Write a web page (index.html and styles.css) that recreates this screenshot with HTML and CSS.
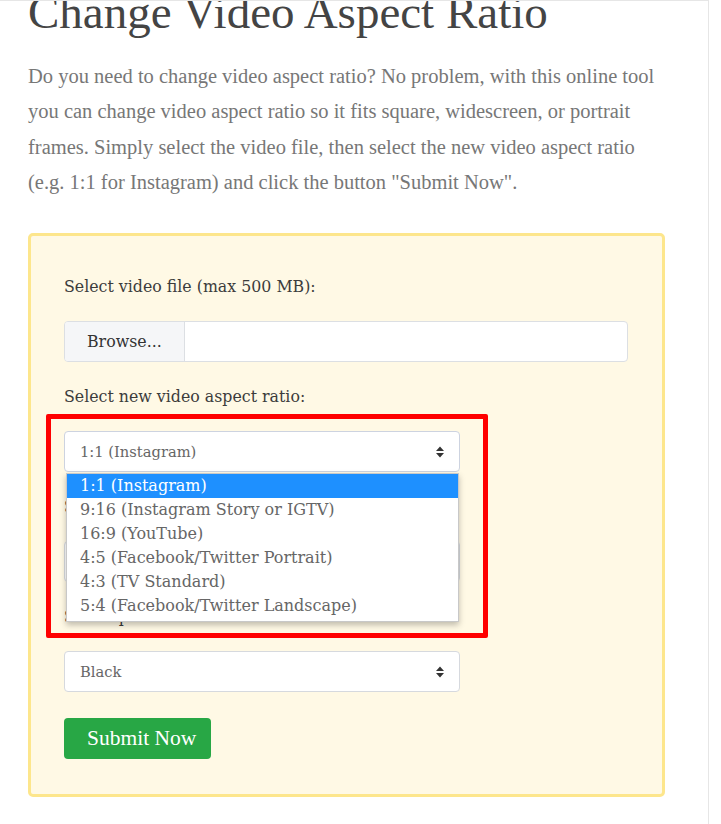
FILE: index.html
```html
<!DOCTYPE html>
<html lang="en">
	<head>
		<meta charset="UTF-8" />
		<meta name="viewport" content="width=device-width, initial-scale=1.0" />
		<title>Change Video Aspect Ratio</title>
		<link rel="stylesheet" href="styles.css">
	</head>
	<body>
		<div class="page">
			<h1 class="title">Change Video Aspect Ratio</h1>
			<p class="intro">
				Do you need to change video aspect ratio? No problem, with this online tool
				you can change video aspect ratio so it fits square, widescreen, or portrait
				frames. Simply select the video file, then select the new video aspect ratio
				(e.g. 1:1 for Instagram) and click the button "Submit Now".
			</p>

			<form class="tool-box">
				<div class="field">
					<label>Select video file (max 500 MB):</label>
					<div class="file-input">
						<span class="browse">Browse...</span>
						<span class="file-name"></span>
					</div>
				</div>

				<div class="field">
					<label>Select new video aspect ratio:</label>
					<div class="select-wrap">
						<div class="select">
							<span>1:1 (Instagram)</span>
							<svg class="arrows" width="8" height="12" viewBox="0 0 8 12">
								<path d="M0 5 L4 0.5 L8 5 Z M0 7 L8 7 L4 11.5 Z" fill="#333" />
							</svg>
						</div>
						<ul class="dropdown">
							<li class="active">1:1 (Instagram)</li>
							<li>9:16 (Instagram Story or IGTV)</li>
							<li>16:9 (YouTube)</li>
							<li>4:5 (Facebook/Twitter Portrait)</li>
							<li>4:3 (TV Standard)</li>
							<li>5:4 (Facebook/Twitter Landscape)</li>
						</ul>
						<div class="highlight"></div>
					</div>
				</div>

				<div class="field">
					<label>Select how to fit the video:</label>
					<div class="select">
						<span>Add padding</span>
						<svg class="arrows" width="8" height="12" viewBox="0 0 8 12">
							<path d="M0 5 L4 0.5 L8 5 Z M0 7 L8 7 L4 11.5 Z" fill="#333" />
						</svg>
					</div>
				</div>

				<div class="field">
					<label>Select pad color:</label>
					<div class="select">
						<span>Black</span>
						<svg class="arrows" width="8" height="12" viewBox="0 0 8 12">
							<path d="M0 5 L4 0.5 L8 5 Z M0 7 L8 7 L4 11.5 Z" fill="#333" />
						</svg>
					</div>
				</div>

				<button type="button" class="submit">Submit Now</button>
			</form>
		</div>
	</body>
</html>
```

FILE: styles.css
```css
body {
	margin: 0;
	background-color: #fff;
	font-family: "Liberation Serif", serif;
}

.page {
	width: 709px;
	min-height: 824px;
	box-sizing: border-box;
	border-top: 1px solid #e6e6e6;
	border-right: 1px solid #e6e6e6;
	padding-left: 28px;
	overflow: hidden;
}

.title {
	margin: -15px 0 0 0;
	font-size: 47px;
	line-height: 52px;
	font-weight: normal;
	color: #444;
}

.intro {
	margin: 21px 0 0 0;
	width: 637px;
	font-size: 20.5px;
	line-height: 35.3px;
	color: #777;
}

.tool-box {
	margin-top: 33px;
	width: 637px;
	box-sizing: border-box;
	padding: 39px 34px 35px 33px;
	background-color: #fff9e5;
	border: 3px solid #fde68c;
	border-radius: 5px;
}

.field {
	margin-bottom: 23px;
}

.field label {
	display: block;
	margin-bottom: 22px;
	font-family: "DejaVu Serif", serif;
	font-size: 15.8px;
	line-height: 24px;
	color: #3c3c3c;
}

.file-input {
	display: flex;
	height: 41px;
	box-sizing: border-box;
	border: 1px solid #dcdfe3;
	border-radius: 4px;
	background-color: #fff;
	overflow: hidden;
}

.file-input .browse {
	display: flex;
	align-items: center;
	width: 120px;
	box-sizing: border-box;
	padding-left: 22px;
	background-color: #f5f6f8;
	border-right: 1px solid #dcdfe3;
	font-family: "DejaVu Serif", serif;
	font-size: 15.8px;
	color: #333;
}

.select-wrap {
	position: relative;
	width: 396px;
}

.select {
	display: flex;
	align-items: center;
	justify-content: space-between;
	width: 396px;
	height: 41px;
	box-sizing: border-box;
	padding: 0 15px 0 15px;
	background-color: #fff;
	border: 1px solid #d6d9de;
	border-radius: 4px;
	font-family: "DejaVu Serif", serif;
	font-size: 14.7px;
	color: #666;
}

.select-wrap .select {
	border-color: #cdd3e0;
}

.dropdown {
	position: absolute;
	top: 42px;
	left: 2px;
	z-index: 5;
	width: 393px;
	box-sizing: border-box;
	margin: 0;
	padding: 0 0 3px 0;
	list-style: none;
	background-color: #fff;
	border: 1px solid #c8c8c8;
	box-shadow: 0 3px 6px rgba(0, 0, 0, 0.25);
	font-family: "DejaVu Serif", serif;
	font-size: 16px;
	color: #666;
}

.dropdown li {
	height: 24px;
	line-height: 24px;
	padding-left: 13px;
}

.dropdown li.active {
	background-color: #1e90ff;
	color: #fff;
}

.highlight {
	position: absolute;
	top: -17px;
	left: -18px;
	z-index: 6;
	width: 442px;
	height: 224px;
	box-sizing: border-box;
	border: 5px solid #f00;
	border-radius: 2px;
}

.submit {
	display: block;
	margin-top: 26px;
	width: 147px;
	height: 41px;
	padding: 0 0 0 23px;
	text-align: left;
	background-color: #28a745;
	border: none;
	border-radius: 4px;
	font-family: "Liberation Serif", serif;
	font-size: 21.5px;
	color: #fff;
}
```
